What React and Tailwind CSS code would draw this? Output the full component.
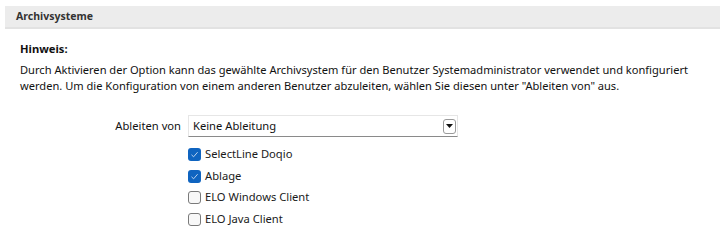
import React from "react";

function Check({ checked, label }) {
  return (
    <div className="flex items-center h-[21.5px]">
      {checked ? (
        <span className="w-[13px] h-[13px] rounded-[3px] bg-[#0f64c0] flex items-center justify-center">
          <svg width="9" height="9" viewBox="0 0 9 9">
            <path d="M1.5 4.8 L3.6 6.8 L7.6 2.2" fill="none" stroke="#b9d2ef" strokeWidth="1" />
          </svg>
        </span>
      ) : (
        <span className="w-[13px] h-[13px] rounded-[3px] border border-[#7a7a7a] bg-[#f8f8f8]" />
      )}
      <span className="ml-[4px] text-[11.2px] text-[#1a1a1a]">{label}</span>
    </div>
  );
}

export default function App() {
  return (
    <div className="w-[726px] h-[240px] bg-white pt-[6px]" style={{ fontFamily: '"Noto Sans", "Open Sans", sans-serif' }}>
      <div className="ml-[5px] w-[715px] h-[23px] bg-[#ececec] border-b-2 border-[#e2e2e2] flex items-center pl-[11px]">
        <span className="text-[10.5px] font-bold text-[#333]">Archivsysteme</span>
      </div>
      <div className="pl-[20px] pt-[10px]">
        <div className="text-[11.2px] font-bold text-[#111] leading-[20px]">Hinweis:</div>
        <p className="mt-[3px] text-[11.1px] text-[#111] leading-[16px] w-[696px]">
          Durch Aktivieren der Option kann das gewählte Archivsystem für den Benutzer Systemadministrator verwendet und konfiguriert werden. Um die Konfiguration von einem anderen Benutzer abzuleiten, wählen Sie diesen unter "Ableiten von" aus.
        </p>
      </div>
      <div className="mt-[21px] flex items-center">
        <div className="w-[182px] text-right pr-[1px] text-[11.2px] text-[#111]">Ableiten von</div>
        <div className="ml-[6px] w-[270px] h-[22px] border border-[#e6e6e6] border-b-[#8a8a8a] flex items-center justify-between pl-[4px] pr-[1px]">
          <span className="text-[11.2px] text-[#111]">Keine Ableitung</span>
          <span className="w-[13px] h-[15px] border border-[#9a9a9a] rounded-[3px] bg-white flex items-center justify-center">
            <svg width="7" height="4" viewBox="0 0 7 4"><path d="M0 0 H7 L3.5 4 Z" fill="#111" /></svg>
          </span>
        </div>
      </div>
      <div className="ml-[188px] mt-[7px] flex flex-col">
        <Check checked label="SelectLine Doqio" />
        <Check checked label="Ablage" />
        <Check label="ELO Windows Client" />
        <Check label="ELO Java Client" />
      </div>
    </div>
  );
}
